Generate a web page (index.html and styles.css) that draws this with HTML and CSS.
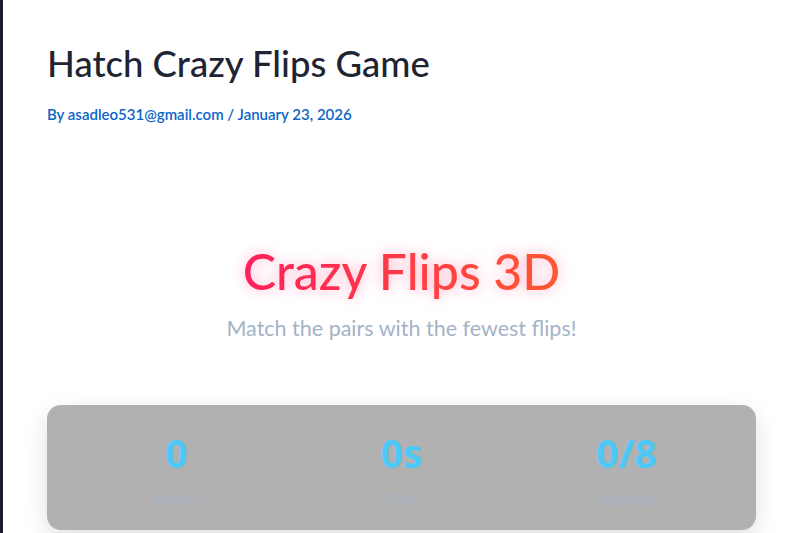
FILE: index.html
```html
<!DOCTYPE html>
<html lang="en">
<head>
<meta charset="UTF-8" />
<meta name="viewport" content="width=device-width, initial-scale=1" />
<title>Hatch Crazy Flips Game</title>
<link rel="stylesheet" href="styles.css">
</head>
<body>

<div class="page">
  <header class="entry-header">
    <h1 class="entry-title">Hatch Crazy Flips Game</h1>
    <div class="entry-meta">By <a href="#">asadleo531@gmail.com</a> / January 23, 2026</div>
  </header>

  <div id="game-wrap">
    <h2 class="game-title">Crazy Flips 3D</h2>
    <p class="game-sub">Match the pairs with the fewest flips!</p>

    <div class="stats">
      <div class="stat">
        <div class="stat-value" id="moves">0</div>
        <div class="stat-label">Moves</div>
      </div>
      <div class="stat">
        <div class="stat-value" id="time">0s</div>
        <div class="stat-label">Time</div>
      </div>
      <div class="stat">
        <div class="stat-value" id="matches">0/8</div>
        <div class="stat-label">Matches</div>
      </div>
    </div>
  </div>
</div>

</body>
</html>
```

FILE: styles.css
```css
body {
  margin: 0;
  background: #fff;
  font-family: Lato, 'Noto Sans', sans-serif;
  border-left: 3px solid #1b1b2f;
  min-height: 100vh;
  box-sizing: border-box;
  overflow: hidden;
}
.page {
  padding: 0 43px 0 44px;
}
.entry-header {
  padding-top: 42px;
}
.entry-title {
  margin: 0;
  font-size: 36.5px;
  font-weight: 500;
  color: #1f2433;
  line-height: 1.2;
}
.entry-meta {
  margin-top: 19px;
  font-size: 15px;
  font-weight: 600;
  line-height: 1.2;
  color: #0b66c8;
}
.entry-meta a {
  color: inherit;
  text-decoration: none;
}
#game-wrap {
  text-align: center;
  padding-top: 118px;
}
.game-title {
  display: inline-block;
  margin: 0;
  font-size: 50px;
  font-weight: 500;
  line-height: 1.2;
  background: linear-gradient(90deg, #ff1f5a, #ff5733);
  -webkit-background-clip: text;
  background-clip: text;
  color: transparent;
  filter: drop-shadow(0 0 7px rgba(255, 40, 110, 0.4));
}
.game-sub {
  margin: 15px 0 0;
  font-size: 21.5px;
  line-height: 1.2;
  color: #a4b3c6;
}
.stats {
  margin-top: 63px;
  background: #b1b1b1;
  border-radius: 14px;
  box-shadow: 0 8px 24px rgba(0, 0, 0, 0.12);
  display: grid;
  grid-template-columns: repeat(3, 1fr);
  padding: 25px 17px 22px;
}
.stat-value {
  font-family: 'Open Sans', sans-serif;
  font-size: 39px;
  font-weight: 700;
  color: #4cc9f8;
  line-height: 1.2;
}
.stat-label {
  margin-top: 14px;
  font-family: 'Open Sans', sans-serif;
  font-size: 15px;
  line-height: 1.2;
  color: #a8b5c8;
}
```
